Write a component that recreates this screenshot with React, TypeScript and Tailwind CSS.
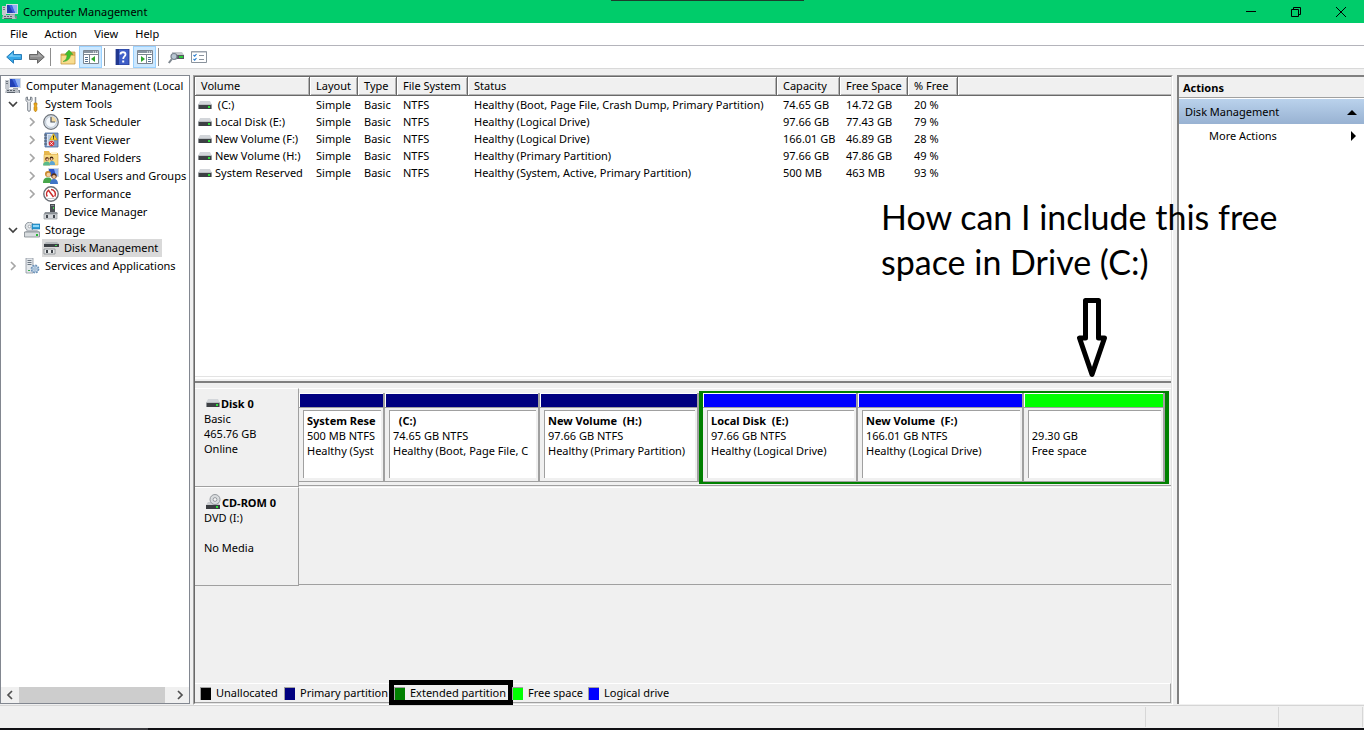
import type { ReactNode } from "react";

/* ---------- icons ---------- */

function Svg({ children, w = 16, h = 16 }: { children: ReactNode; w?: number; h?: number }) {
  return (
    <svg width={w} height={h} viewBox={`0 0 ${w} ${h}`} className="shrink-0" aria-hidden="true">
      {children}
    </svg>
  );
}

const ComputerIcon = () => (
  <Svg>
    <path d="M0 2h4v9H0z" fill="#c4c8ce" />
    <path d="M1 3h2v1H1zM1 5h2v1H1z" fill="#6f7780" />
    <path d="M4 0h12v10H4z" fill="#d5dbe3" />
    <path d="M5 1h10v8H5z" fill="#1f3fb4" />
    <path d="M9 1h6v8h-2z" fill="#8fb2f4" />
    <path d="M7 1h3l3 8h-2z" fill="#3f66dc" />
    <path d="M8 10h5v2H8z" fill="#9aa1ab" />
    <path d="M1 11h11l2 4H0z" fill="#b9bec5" />
    <path d="M2 12h2v1H2zM5 12h2v1H5zM8 12h2v1H8zM2 14h8v1H2z" fill="#59616b" />
    <path d="M13 12h2v3h-1z" fill="#7d858f" />
  </Svg>
);

const ToolsIcon = () => (
  <Svg>
    <path
      d="M2 1.500v3l1.700 2V14a1.300 1.300 0 0 0 2.600 0V6.500L8 4.500v-3L6.500 1v3h-3V1z"
      fill="#eceef0"
      stroke="#7b828b"
      strokeWidth="1"
    />
    <path d="M11.500 1v6" stroke="#8a9099" strokeWidth="1.500" />
    <path d="M10 7h3v2l-.700 1 .700 1v3l-1 1.500h-1L10 14v-3l.700-1L10 9z" fill="#eaa91c" stroke="#b97a0c" strokeWidth=".6" />
  </Svg>
);

const ClockIcon = () => (
  <Svg>
    <circle cx="8" cy="8" r="7.300" fill="#dfe6ee" stroke="#6f757c" strokeWidth="1.200" />
    <circle cx="8" cy="8" r="5.400" fill="#f4f8fc" stroke="#a6b3c2" strokeWidth=".6" />
    <path d="M8 8V2.600A5.400 5.400 0 0 1 13.400 8z" fill="#f1d8a0" />
    <path d="M8 3v5h4" fill="none" stroke="#4d545c" strokeWidth="1.200" />
  </Svg>
);

const EventIcon = () => (
  <Svg>
    <path d="M2 1h13v14H2z" fill="#7f9cc8" stroke="#4a6a9b" strokeWidth=".8" />
    <path d="M4 2h7v12H4z" fill="#dfe8f4" />
    <path d="M5 4h3M5 6h3M5 8h2M5 10h2" stroke="#8ea7c8" strokeWidth="1" />
    <path d="M1 3h3M1 6h3M1 9h3M1 12h3" stroke="#515b67" strokeWidth="1" />
    <path d="M10.500 1.500l3.800 6.500H6.700z" fill="#ffd633" stroke="#b58d00" strokeWidth=".6" />
    <path d="M10.500 3.500v2.300M10.500 6.300v1" stroke="#222" strokeWidth="1" />
    <circle cx="8.500" cy="11.500" r="2.800" fill="#d8343a" />
    <path d="M7.300 10.300l2.400 2.400M9.700 10.300l-2.400 2.400" stroke="#fff" strokeWidth=".9" />
  </Svg>
);

const SharedIcon = () => (
  <Svg>
    <path d="M1 1h5l1 2h8v12H1z" fill="#e7b84e" />
    <path d="M8 2h6v3H8z" fill="#fff3cf" />
    <path d="M1 4.500h14V15H1z" fill="#f8da83" stroke="#d8a640" strokeWidth=".6" />
    <circle cx="4" cy="9" r="1.900" fill="#6b3c1e" />
    <circle cx="8.500" cy="8.500" r="1.900" fill="#3f2414" />
    <circle cx="4.300" cy="9.600" r="1.100" fill="#f2c6a0" />
    <circle cx="8.600" cy="9.200" r="1.100" fill="#f2c6a0" />
    <path d="M0 15.500c0-3 2-4 4-4s3 1 3 4z" fill="#59b98a" />
    <path d="M6.500 15c0-3 .500-4 2.500-4s3 1 3 4z" fill="#5ba4d4" />
  </Svg>
);

const UsersIcon = () => (
  <Svg>
    <path d="M5 0h11v9H5z" fill="#cfd6df" />
    <path d="M6 1h9v7H6z" fill="#2b52c8" />
    <path d="M11 1h4v7h-2z" fill="#8fb2f4" />
    <circle cx="5" cy="6" r="3" fill="#c98a2d" />
    <circle cx="5.500" cy="6.800" r="2" fill="#f5cfa4" />
    <circle cx="11" cy="8" r="2.700" fill="#5b3218" />
    <circle cx="11" cy="8.800" r="1.800" fill="#f0c095" />
    <path d="M0 15c0-4 2-5.500 5-5.500S9 11 9 15z" fill="#47a64a" />
    <path d="M7 16c0-3.500 1.500-5 4-5s4 1.500 4 5z" fill="#3f74c6" />
  </Svg>
);

const PerformanceIcon = () => (
  <Svg>
    <circle cx="8" cy="8" r="7.200" fill="#fff" stroke="#6a6f76" strokeWidth="1.400" />
    <path d="M4.300 10.500A4.600 4.600 0 0 1 5.500 4.300l5 6.700" fill="none" stroke="#c92a2a" strokeWidth="1.500" />
    <path d="M8 3.600a4.600 4.600 0 0 1 3.800 6.900" fill="none" stroke="#c92a2a" strokeWidth="1.500" />
    <path d="M4.500 12.500h7" stroke="#c4c8cc" strokeWidth="1" />
  </Svg>
);

const DeviceIcon = () => (
  <Svg>
    <path d="M7 0h5v9H7z" fill="#4a4e54" />
    <path d="M8 1h3v1H8z" fill="#8b9096" />
    <path d="M10 3h1v2h-1z" fill="#3fdc4c" />
    <path d="M2 8h12l1 2H1z" fill="#8f949a" />
    <path d="M1 10h13v5H1z" fill="#d3d6da" stroke="#80868c" strokeWidth=".6" />
    <path d="M3 11h2v3H3zM10 11h2v3h-2z" fill="#43484e" />
  </Svg>
);

const StorageIcon = () => (
  <Svg>
    <circle cx="5.500" cy="4.500" r="4.300" fill="#dfe3e6" stroke="#7f878f" strokeWidth=".9" />
    <circle cx="5.500" cy="4.500" r="1.300" fill="#fff" stroke="#7f878f" strokeWidth=".6" />
    <path d="M8 2h8v5H8z" fill="#2d9ed8" stroke="#1b6fa5" strokeWidth=".6" />
    <path d="M9 3h6v2H9z" fill="#8ed6f7" />
    <path d="M1 10l2-2h10l3 2z" fill="#b7bcc2" />
    <path d="M.500 10h15v5H.500z" fill="#d8dcdf" stroke="#7e858c" strokeWidth=".8" />
    <path d="M12 12h2v2h-2z" fill="#25b733" />
  </Svg>
);

const DiskMgmtIcon = () => (
  <Svg>
    <path d="M3 2h11l2 2H1z" fill="#b4b8bb" />
    <path d="M1 4h15v3H1z" fill="#3d4146" />
    <path d="M12 5h2v1h-2z" fill="#42dd50" />
    <path d="M1 9h11v5H1z" fill="#e9ebec" stroke="#83888d" strokeWidth=".8" />
    <path d="M3 10h2v3H3zM8 10h2v3H8z" fill="#3f444a" />
  </Svg>
);

const ServicesIcon = () => (
  <Svg>
    <path d="M2 0h7v15H2z" fill="#e3e7eb" stroke="#8d959e" strokeWidth=".8" />
    <path d="M3.500 2.500h4M3.500 4.500h4M3.500 6.500h4" stroke="#6d7782" strokeWidth="1" />
    <path d="M4 12h2v1H4z" fill="#35b045" />
    <circle cx="11" cy="11" r="3.600" fill="#cfe0ef" stroke="#6d92b8" strokeWidth="1.600" strokeDasharray="1.800 1" />
    <circle cx="11" cy="11" r="2.900" fill="#cfe0ef" stroke="#6d92b8" strokeWidth=".6" />
    <circle cx="11" cy="11" r="1.200" fill="#fff" stroke="#6d92b8" strokeWidth=".8" />
  </Svg>
);

const DriveIcon = () => (
  <Svg w={14} h={8}>
    <path d="M2 0h10l2 4H0z" fill="#d3d6da" />
    <path d="M0 3h14v1H0z" fill="#b9bdc1" />
    <path d="M0 4h14v4H0z" fill="#3d4044" />
    <path d="M0 4h1v4H0zM13 4h1v4h-1z" fill="#8d9195" />
    <path d="M10 5h2v2h-2z" fill="#2fe03c" />
  </Svg>
);

const CdIcon = () => (
  <Svg w={15} h={16}>
    <path d="M2 8h10l2 3H0z" fill="#c9ccd0" />
    <path d="M0 11h14v4H0z" fill="#3a3d41" />
    <path d="M10 12h2v2h-2z" fill="#2fe03c" />
    <circle cx="9" cy="5.500" r="5" fill="#d9dcde" stroke="#8b9095" strokeWidth=".9" />
    <circle cx="9" cy="5.500" r="1.900" fill="#f5f5f5" stroke="#8b9095" strokeWidth=".9" />
  </Svg>
);

const ArrowBack = () => (
  <Svg>
    <path d="M.700 8L7.500 1.800v3.700h8v5h-8v3.700z" fill="#35a7e8" stroke="#2a7db8" strokeWidth="1" />
    <path d="M2.500 7.700L6.700 4v2.500h7.800v1.200z" fill="#7accf6" />
  </Svg>
);

const ArrowForward = () => (
  <Svg>
    <path d="M15.300 8L8.500 1.800v3.700h-8v5h8v3.700z" fill="#8d8d8d" stroke="#666" strokeWidth="1" />
    <path d="M13.500 7.700L9.300 4v2.500H1.500v1.200z" fill="#acacac" />
  </Svg>
);

const FolderUpIcon = () => (
  <Svg>
    <path d="M1 5h5l1-2h8v12H1z" fill="#e3b455" stroke="#c09a4a" strokeWidth=".8" />
    <path d="M1.500 7h13v7.500h-13z" fill="#f8dc8e" />
    <path d="M3 12.500C6 11.500 7 9 7 5.500H5L9 1l4 4.500h-2.500c0 4-3 7-7.500 7z" fill="#3fc02c" stroke="#3f9a34" strokeWidth=".5" />
  </Svg>
);

function PaneIcon({ flip = false }: { flip?: boolean }) {
  return (
    <Svg>
      <path d="M.500 1.500h15v13H.500z" fill="#fff" stroke="#7b8590" />
      <path d="M1 2h14v2H1z" fill="#8793a0" />
      <path d="M10 2.500h1v1h-1zM12 2.500h1v1h-1zM14 2.500h1v1h-1z" fill="#fff" />
      <path d="M1 5.500h14" stroke="#7b8590" />
      {flip ? (
        <>
          <path d="M9.500 6v8" stroke="#7b8590" />
          <path d="M11 8.500h3M11 10.500h3M11 12.500h3" stroke="#54708f" />
          <path d="M4 7l4 3-4 3z" fill="#2fa52c" />
        </>
      ) : (
        <>
          <path d="M6.500 6v8" stroke="#7b8590" />
          <path d="M2 8.500h3M2 10.500h3M2 12.500h3" stroke="#54708f" />
          <path d="M12 7l-4 3 4 3z" fill="#2fa52c" />
        </>
      )}
    </Svg>
  );
}

const HelpIcon = () => (
  <Svg>
    <path d="M2 0h13v16H2z" fill="#3f5fc8" stroke="#22358a" strokeWidth=".8" />
    <path d="M2 0h3v16H2z" fill="#20378f" />
    <path d="M6.500 5.500c0-3 5-3 5 0 0 2-2.300 2-2.300 4.500" fill="none" stroke="#fff" strokeWidth="1.800" />
    <path d="M8.200 11.500h2v2h-2z" fill="#fff" />
  </Svg>
);

const SearchDriveIcon = () => (
  <Svg>
    <path d="M4 3h10l2 3H4z" fill="#c3c7cb" />
    <path d="M4 6h12v4H4z" fill="#555b61" />
    <path d="M11 7h4v2h-4z" fill="#2ccc3b" />
    <circle cx="6" cy="7.500" r="3" fill="#b9c6d2" stroke="#78838e" strokeWidth="1.200" />
    <path d="M3.800 10.200L.800 14" stroke="#7f878f" strokeWidth="2" />
  </Svg>
);

const ListIcon = () => (
  <Svg>
    <path d="M.500 2.500h15v11H.500z" fill="#fff" stroke="#8a939d" />
    <path d="M1 2h14v1.500H1z" fill="#9aa3ad" />
    <path d="M2.500 6l1.200 1.200L5.500 5M2.500 10l1.200 1.200L5.500 9" fill="none" stroke="#2b7fd0" strokeWidth="1.100" />
    <path d="M8 6.500h5M8 10.500h5" stroke="#8a939d" />
  </Svg>
);

function Chevron({ dir }: { dir: "down" | "right" | "left" }) {
  const d = { down: "M1 3l4 4 4-4", right: "M3 1l4 4-4 4", left: "M7 1L3 5l4 4" }[dir];
  return (
    <Svg w={10} h={10}>
      <path d={d} fill="none" stroke="currentColor" strokeWidth="1.700" />
    </Svg>
  );
}

/* ---------- tree ---------- */

type Node = { label: string; icon: ReactNode; open?: boolean; leaf?: boolean; selected?: boolean; children?: Node[] };

const tree: Node[] = [
  {
    label: "System Tools",
    icon: <ToolsIcon />,
    open: true,
    children: [
      { label: "Task Scheduler", icon: <ClockIcon /> },
      { label: "Event Viewer", icon: <EventIcon /> },
      { label: "Shared Folders", icon: <SharedIcon /> },
      { label: "Local Users and Groups", icon: <UsersIcon /> },
      { label: "Performance", icon: <PerformanceIcon /> },
      { label: "Device Manager", icon: <DeviceIcon />, leaf: true },
    ],
  },
  {
    label: "Storage",
    icon: <StorageIcon />,
    open: true,
    children: [{ label: "Disk Management", icon: <DiskMgmtIcon />, leaf: true, selected: true }],
  },
  { label: "Services and Applications", icon: <ServicesIcon /> },
];

function TreeItem({ node }: { node: Node }) {
  return (
    <li>
      <div className="flex h-[18px] items-center gap-0.5">
        {node.leaf ? (
          <span className="w-4 shrink-0" />
        ) : (
          <button
            aria-label={`Toggle ${node.label}`}
            className={`flex w-4 shrink-0 justify-center ${node.open ? "text-[#404040]" : "text-[#a6a6a6]"}`}
          >
            <Chevron dir={node.open ? "down" : "right"} />
          </button>
        )}
        <a href="#" className={`flex h-full items-center gap-[5px] pr-1 pl-px ${node.selected ? "bg-[#d9d9d9]" : ""}`}>
          {node.icon}
          <span>{node.label}</span>
        </a>
      </div>
      {node.children && (
        <ul className="pl-[19px]">
          {node.children.map((c) => (
            <TreeItem key={c.label} node={c} />
          ))}
        </ul>
      )}
    </li>
  );
}

function TreePane() {
  return (
    <nav className="mr-[3px] mb-px flex w-[190px] shrink-0 flex-col overflow-hidden border border-[#828790] bg-white">
      <div className="flex-1 overflow-hidden pt-px pl-1 whitespace-nowrap">
        <a href="#" className="flex h-[18px] items-center gap-[5px]">
          <ComputerIcon />
          <span>Computer Management (Local</span>
        </a>
        <ul>
          {tree.map((n) => (
            <TreeItem key={n.label} node={n} />
          ))}
        </ul>
      </div>
      <div className="flex h-4 items-center bg-[#f0f0f0] text-[#505050]">
        <button aria-label="Scroll left" className="flex w-[18px] justify-center">
          <Chevron dir="left" />
        </button>
        <div className="h-full w-[146px] bg-[#cdcdcd]" />
        <button aria-label="Scroll right" className="ml-auto flex w-[18px] justify-center">
          <Chevron dir="right" />
        </button>
      </div>
    </nav>
  );
}

/* ---------- volume list ---------- */

const headers = ["Volume", "Layout", "Type", "File System", "Status", "Capacity", "Free Space", "% Free"];

const volumes = [
  ["\u00a0(C:)", "Simple", "Basic", "NTFS", "Healthy (Boot, Page File, Crash Dump, Primary Partition)", "74.65 GB", "14.72 GB", "20 %"],
  ["Local Disk (E:)", "Simple", "Basic", "NTFS", "Healthy (Logical Drive)", "97.66 GB", "77.43 GB", "79 %"],
  ["New Volume (F:)", "Simple", "Basic", "NTFS", "Healthy (Logical Drive)", "166.01 GB", "46.89 GB", "28 %"],
  ["New Volume (H:)", "Simple", "Basic", "NTFS", "Healthy (Primary Partition)", "97.66 GB", "47.86 GB", "49 %"],
  ["System Reserved", "Simple", "Basic", "NTFS", "Healthy (System, Active, Primary Partition)", "500 MB", "463 MB", "93 %"],
];

function VolumeTable() {
  return (
    <table className="w-full table-fixed border-separate border-spacing-0 text-left whitespace-nowrap">
      <colgroup>
        <col className="w-[115px]" />
        <col className="w-[48px]" />
        <col className="w-[39px]" />
        <col className="w-[71px]" />
        <col className="w-[309px]" />
        <col className="w-[63px]" />
        <col className="w-[68px]" />
        <col className="w-[50px]" />
        <col />
      </colgroup>
      <thead>
        <tr className="h-[19px] bg-[#f0f0f0]">
          {headers.map((h) => (
            <th
              key={h}
              scope="col"
              className="border-r border-b border-[#696969] p-0 pl-1.5 font-normal shadow-[inset_1px_1px_0_#fff,inset_-1px_-1px_0_#b4b4b4]"
            >
              {h}
            </th>
          ))}
          <td className="border-b border-[#696969] p-0 shadow-[inset_1px_1px_0_#fff,inset_0_-1px_0_#b4b4b4]" />
        </tr>
      </thead>
      <tbody>
        {volumes.map((row) => (
          <tr key={row[0]} className="h-[17px]">
            {row.map((cell, i) =>
              i === 0 ? (
                <td key={i} className="p-0 pl-[3px]">
                  <span className="flex items-center gap-[3px]">
                    <DriveIcon />
                    {cell}
                  </span>
                </td>
              ) : (
                <td key={i} className="p-0 pl-1.5">
                  {cell}
                </td>
              ),
            )}
            <td />
          </tr>
        ))}
      </tbody>
    </table>
  );
}

/* ---------- disk map ---------- */

type PartitionProps = { name?: string; size: string; status: string; width: string; color: string };

function Partition({ name, size, status, width, color }: PartitionProps) {
  return (
    <article className={`flex min-w-0 basis-0 flex-col border-r-2 border-b border-[#a0a0a0] bg-[#f0f0f0] ${width}`}>
      <div className={`h-[14px] border-t border-l border-white ${color}`} />
      <div className="flex flex-1 flex-col border-t border-[#a0a0a0] pt-0.5 pr-0.5 pb-[3px] pl-1">
        <div className="flex-1 border-t border-l border-[#a0a0a0] bg-white px-[3px] pt-0.5">
          <div className="overflow-hidden leading-[15px] whitespace-pre">
            <h3 className="h-[15px] font-bold">{name}</h3>
            <p>{size}</p>
            <p>{status}</p>
          </div>
        </div>
      </div>
    </article>
  );
}

function DiskLabel({ icon, name, lines }: { icon: ReactNode; name: string; lines: string[] }) {
  return (
    <div className="w-[104px] shrink-0 border-t border-r border-b border-t-white border-r-[#a0a0a0] border-b-[#a0a0a0] pt-[7px] pl-[9px] leading-[15px]">
      <h2 className="flex h-[15px] items-end gap-px pl-0.5 font-bold">
        <span className="flex h-[15px] items-center pb-0.5">{icon}</span>
        {name}
      </h2>
      {lines.map((l, i) => (
        <p key={i} className="h-[15px]">
          {l}
        </p>
      ))}
    </div>
  );
}

function DiskMap() {
  return (
    <div className="flex flex-1 flex-col bg-[#f0f0f0] pt-[5px]">
      <section className="flex h-[99px]">
        <DiskLabel icon={<DriveIcon />} name="Disk 0" lines={["Basic", "465.76 GB", "Online"]} />
        <div className="mb-px flex min-w-0 flex-1 border-t border-b border-t-white border-b-[#a0a0a0] pr-0.5">
          <div className="flex min-w-0 grow-[400] basis-0 pt-1 pb-[3px]">
            <Partition name="System Rese" size="500 MB NTFS" status="Healthy (Syst" width="grow-[84]" color="bg-[#000080]" />
            <Partition name={"  (C:)"} size="74.65 GB NTFS" status="Healthy (Boot, Page File, C" width="grow-[153]" color="bg-[#000080]" />
            <Partition name="New Volume  (H:)" size="97.66 GB NTFS" status="Healthy (Primary Partition)" width="grow-[157]" color="bg-[#000080]" />
          </div>
          <div className="flex min-w-0 grow-[470] basis-0 pt-0.5 pb-px">
            <div className="flex min-w-0 flex-1 border-x-4 border-t-2 border-b-2 border-[#008000]">
              <Partition name="Local Disk  (E:)" size="97.66 GB NTFS" status="Healthy (Logical Drive)" width="grow-[155]" color="bg-[#0000ff]" />
              <Partition name="New Volume  (F:)" size="166.01 GB NTFS" status="Healthy (Logical Drive)" width="grow-[166]" color="bg-[#0000ff]" />
              <Partition size="29.30 GB" status="Free space" width="grow-[141]" color="bg-[#00ff00]" />
            </div>
          </div>
        </div>
      </section>
      <section className="flex h-[99px]">
        <DiskLabel icon={<CdIcon />} name="CD-ROM 0" lines={["DVD (I:)", "", "No Media"]} />
        <div className="mb-px flex-1 border-t border-b border-t-white border-b-[#a0a0a0]" />
      </section>
    </div>
  );
}

const legend = [
  { label: "Unallocated", color: "bg-black", box: "w-[84px]" },
  { label: "Primary partition", color: "bg-[#000080]", box: "w-[110px]" },
  { label: "Extended partition", color: "bg-[#008000]", box: "w-[118px]", marked: true },
  { label: "Free space", color: "bg-[#00ff00]", box: "w-[76px]" },
  { label: "Logical drive", color: "bg-[#0000ff]", box: "w-[90px]" },
];

function Legend() {
  return (
    <ul className="flex h-5 items-center border-t border-r border-b border-t-white border-r-[#a0a0a0] border-b-[#a0a0a0] bg-[#f0f0f0] pl-[5px] whitespace-nowrap">
      {legend.map((l) => (
        <li key={l.label} className={`relative flex items-center gap-[5px] ${l.box}`}>
          <span className={`h-[13px] w-[11px] border-t border-l border-[#a0a0a0] ${l.color}`} />
          {l.label}
          {l.marked && <span className="absolute -top-[5px] -right-px -bottom-1 -left-[5px] border-[5px] border-black" />}
        </li>
      ))}
    </ul>
  );
}

/* ---------- handwritten note over the panes ---------- */

function Note() {
  return (
    <div className="absolute top-[119px] left-[688px] w-[420px]">
      <p className="font-['Lato','Liberation_Sans',sans-serif] text-[34px] leading-[45px] whitespace-nowrap">
        How can I include this free
        <br />
        space in Drive (C:)
      </p>
      <svg width="32" height="84" viewBox="0 0 32 84" className="absolute top-[103px] left-[195px]" aria-hidden="true">
        <path d="M9.500 3.500h13V41h6L16 77.500 3.500 41h6z" fill="#fff" stroke="#000" strokeWidth="5" strokeLinejoin="round" />
      </svg>
    </div>
  );
}

/* ---------- window ---------- */

function ToolButton({ label, active, children }: { label: string; active?: boolean; children: ReactNode }) {
  return (
    <button
      aria-label={label}
      className={`flex h-[22px] w-[23px] items-center justify-center ${active ? "border border-[#99d1ff] bg-[#cce8ff]" : ""}`}
    >
      {children}
    </button>
  );
}

const Separator = () => <span className="mr-[5px] ml-0.5 h-[18px] w-px bg-[#8d8d8d]" />;

export default function App() {
  return (
    <div className="flex h-screen flex-col overflow-hidden bg-[#f0f0f0] font-['Noto_Sans','Open_Sans',sans-serif] text-[11px] leading-[16px] text-black">
      <header className="relative flex h-[23px] shrink-0 items-center bg-[#00cc6a] pl-0.5">
        <span className="absolute top-0 left-[611px] h-px w-[193px] bg-[#1c3d2c]" />
        <ComputerIcon />
        <h1 className="pl-[5px]">Computer Management</h1>
        <div className="ml-auto flex h-full">
          <button aria-label="Minimize" className="flex w-[46px] items-center justify-center">
            <Svg w={10} h={10}>
              <path d="M0 4h10v1H0z" />
            </Svg>
          </button>
          <button aria-label="Restore" className="flex w-11 items-center justify-center">
            <Svg w={10} h={10}>
              <path d="M.500 2.500h7v7h-7zM2.500 2V.500h7v7H8" fill="none" stroke="#000" />
            </Svg>
          </button>
          <button aria-label="Close" className="flex w-[46px] items-center justify-center">
            <Svg w={10} h={10}>
              <path d="M0 0l10 10M10 0L0 10" stroke="#000" />
            </Svg>
          </button>
        </div>
      </header>

      <nav className="flex h-[23px] shrink-0 items-center gap-[17px] border-b border-[#b4b4bb] bg-white pl-2.5">
        <button>File</button>
        <button>Action</button>
        <button>View</button>
        <button>Help</button>
      </nav>

      <div className="flex h-[23px] shrink-0 items-center border-b border-[#d9d9d9] bg-white pl-0.5">
        <ToolButton label="Back"><ArrowBack /></ToolButton>
        <ToolButton label="Forward"><ArrowForward /></ToolButton>
        <Separator />
        <ToolButton label="Up one level"><FolderUpIcon /></ToolButton>
        <ToolButton label="Console tree" active><PaneIcon /></ToolButton>
        <Separator />
        <ToolButton label="Help"><HelpIcon /></ToolButton>
        <ToolButton label="Action pane" active><PaneIcon flip /></ToolButton>
        <Separator />
        <ToolButton label="Rescan"><SearchDriveIcon /></ToolButton>
        <ToolButton label="Settings"><ListIcon /></ToolButton>
      </div>

      <main className="flex min-h-0 flex-1 border-b border-[#d5d5d5] pt-1.5">
        <TreePane />

        <section className="relative mr-1 flex min-w-0 flex-1 flex-col">
          <div className="flex min-h-0 flex-1 flex-col border border-[#a0a0a0] border-r-white border-b-white">
            <div className="flex min-h-0 flex-1 flex-col border border-[#696969] border-r-[#e3e3e3] border-b-[#e3e3e3]">
              <div className="h-[299px] shrink-0 overflow-hidden bg-white">
                <VolumeTable />
              </div>
              <div className="h-[7px] shrink-0 border-t border-b-2 border-t-[#e3e3e3] border-b-[#808080] bg-[#f0f0f0] shadow-[inset_0_2px_0_#fff]" />
              <DiskMap />
              <Legend />
            </div>
          </div>
          <Note />
        </section>

        <aside className="mb-px w-[187px] shrink-0 border-t-2 border-l-2 border-[#808080] bg-white">
          <h2 className="flex h-[21px] items-center border-b border-[#a0a0a0] bg-[#f0f0f0] pt-px pl-1 font-bold">Actions</h2>
          <button className="mt-px flex h-[25px] w-full items-center justify-between bg-linear-to-b from-[#bad2ec] to-[#98b2d2] pr-[7px] pl-1.5">
            Disk Management
            <Svg w={10} h={6}>
              <path d="M0 6l5-5 5 5z" />
            </Svg>
          </button>
          <button className="flex h-6 w-full items-center justify-between pr-[7px] pl-[30px]">
            More Actions
            <Svg w={6} h={10}>
              <path d="M0 0l5 5-5 5z" />
            </Svg>
          </button>
        </aside>
      </main>

      <footer className="flex h-[22px] shrink-0 justify-end py-px">
        <span className="w-[133px] border-l border-[#d7d7d7]" />
        <span className="mr-px w-[85px] border-x border-[#d7d7d7]" />
      </footer>
      <div className="flex h-0.5 shrink-0 bg-[#101014]">
        <span className="ml-[100px] w-12 bg-[#3a3a3e]" />
      </div>
    </div>
  );
}
